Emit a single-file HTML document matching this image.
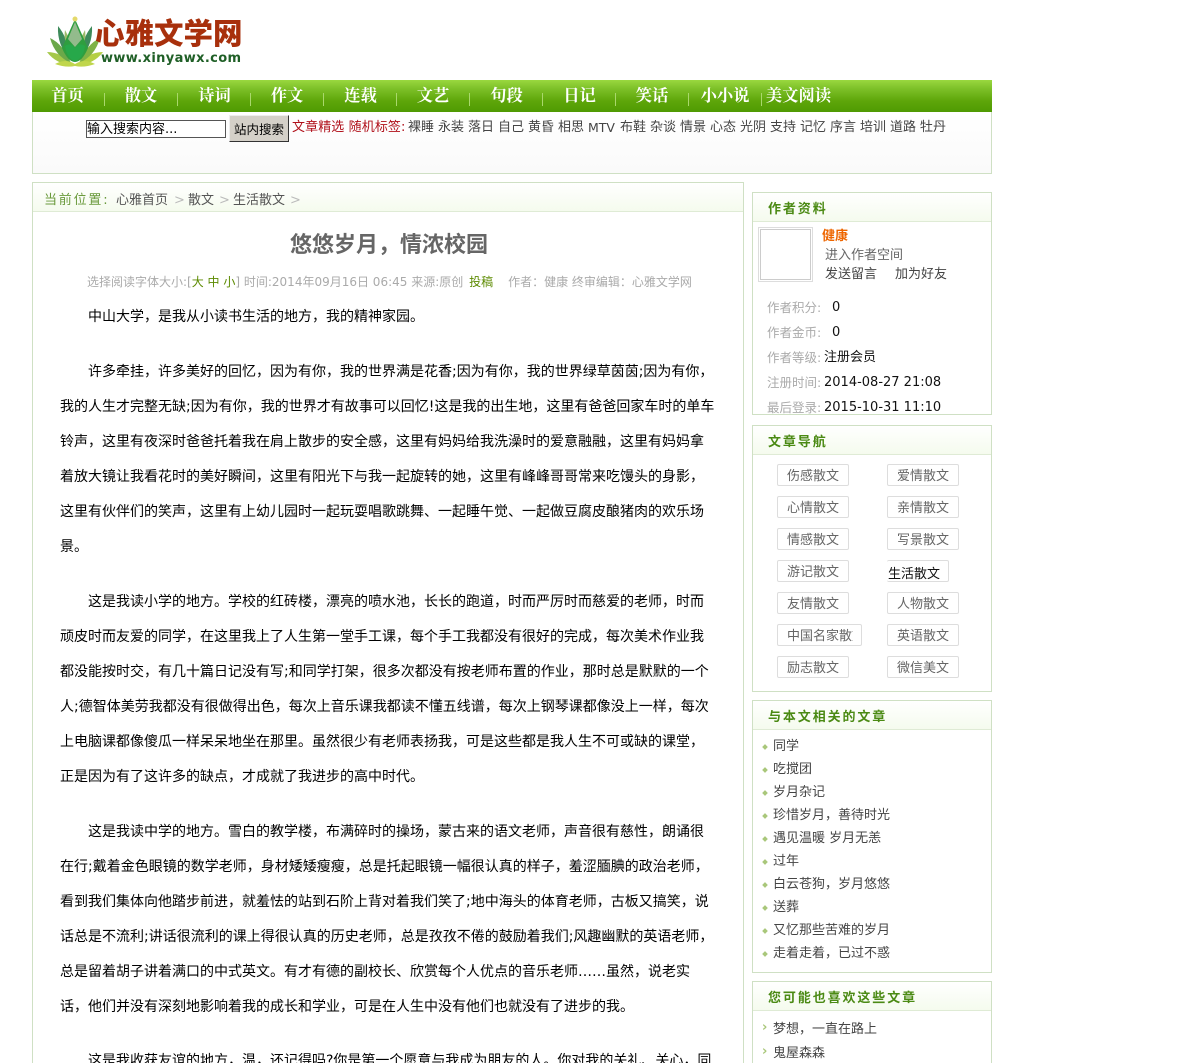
<!DOCTYPE html>
<html lang="zh-CN"><head><meta charset="utf-8"><title>悠悠岁月，情浓校园</title>
<style>
html,body{margin:0;padding:0;background:#fff;width:1200px;height:1063px;overflow:hidden}
body{position:relative;font-family:"DejaVu Sans","WenQuanYi Zen Hei","Noto Sans CJK SC",sans-serif;font-size:13px;color:#333}
.a,.a *{white-space:nowrap}
.a{position:absolute}
.box{position:absolute;box-sizing:border-box;border:1px solid #cfe0c4;background:#fff;overflow:hidden}
.hd{position:absolute;left:0;right:0;top:0;height:28px;background:linear-gradient(#fff,#f5fbee);border-bottom:1px solid #dfebd5}
.ht{position:absolute;left:15px;top:9px;font-weight:bold;font-size:13px;letter-spacing:1.9px;color:#4b8a14;line-height:16px}
.n{position:absolute;top:84px;font-family:"Liberation Serif","Noto Serif CJK SC",serif;font-size:16.3px;font-weight:bold;color:#fff;line-height:24px;white-space:nowrap;transform:translateX(-50%)}
.s{position:absolute;top:93px;width:1px;height:13px;background:#a9d86c}
.t{position:absolute;top:120px;line-height:15px;color:#444;font-size:13px;white-space:nowrap}
.l{position:absolute;font-size:14px;line-height:20px;color:#000;white-space:nowrap;font-family:"WenQuanYi Zen Hei","DejaVu Sans",sans-serif}
#art{position:absolute;left:0;top:0;width:714px;height:1063px;overflow:hidden}
.btn{position:absolute;box-sizing:border-box;width:72px;height:22px;border:1px solid #ddd;border-radius:2px;padding-left:9px;line-height:23px;color:#666;font-size:13px;overflow:hidden;white-space:nowrap;background:#fff}
.li{position:absolute;left:20px;color:#444;line-height:16px;font-size:13px;white-space:nowrap}
.d{position:absolute;left:10px;width:4px;height:4px;background:#a9c77a;transform:rotate(45deg)}
.g{color:#aaa;position:absolute;left:14px;line-height:16px;font-size:12.5px;white-space:nowrap}
.v{color:#111;position:absolute;line-height:16px;font-size:13px;white-space:nowrap}
</style></head><body>

<!-- logo -->
<svg class="a" style="left:46px;top:14px" width="58" height="54" viewBox="0 0 58 54">
<path d="M1 38 Q16 38 26 51 Q10 50 1 38Z" fill="#a5c84a"/>
<path d="M57 38 Q42 38 32 51 Q48 50 57 38Z" fill="#b5cf44"/>
<path d="M4 24 Q17 30 25 49 Q9 42 4 24Z" fill="#6ba84a"/>
<path d="M54 24 Q41 30 33 49 Q49 42 54 24Z" fill="#7fb246"/>
<path d="M12 12 Q22 24 24 44 Q11 32 12 12Z" fill="#3d8a5a"/>
<path d="M46 12 Q36 24 34 44 Q47 32 46 12Z" fill="#3d8a5a"/>
<path d="M19 16 Q25 26 25 38 Q17 28 19 16Z" fill="#9dbb6a"/>
<path d="M39 16 Q33 26 33 38 Q41 28 39 16Z" fill="#9dbb6a"/>
<path d="M29 5 L42 34 Q36 48 29 48 Q22 48 16 34Z" fill="#2f9e3f"/>
<path d="M29 8 L36 25 L29 33 L22 25Z" fill="#93bb8c"/>
<path d="M19 32 Q25 28 29 34 Q33 28 39 32 Q37 45 29 47 Q21 45 19 32Z" fill="#27a84a"/>
<circle cx="29" cy="5" r="2.5" fill="#e4d96a"/>
<path d="M9 50 Q20 44 29 50 Q38 44 49 50 Q38 54 29 52 Q20 54 9 50Z" fill="#c0d64c"/>
</svg>
<div class="a" style="left:95px;top:14px;font-family:'Noto Sans CJK SC',sans-serif;font-weight:900;font-size:29.5px;line-height:36px;color:#a8300c">心雅文学网</div>
<div class="a" style="left:101px;top:51px;font-weight:bold;font-size:13px;line-height:16px;color:#1f5f26;letter-spacing:.36px">www.xinyawx.com</div>

<!-- nav -->
<div class="a" style="left:32px;top:80px;width:960px;height:32px;background:linear-gradient(#9ad83f 0,#7fc22a 25%,#5ea60a 65%,#4f9a02 100%)"></div>
<div class="n" style="left:67.5px">首页</div><div class="n" style="left:141px">散文</div><div class="n" style="left:214.5px">诗词</div><div class="n" style="left:287px">作文</div><div class="n" style="left:360.5px">连载</div><div class="n" style="left:433px">文艺</div><div class="n" style="left:506.5px">句段</div><div class="n" style="left:579.5px">日记</div><div class="n" style="left:652px">笑话</div><div class="n" style="left:725px">小小说</div><div class="n" style="left:798.5px">美文阅读</div>
<i class="s" style="left:104px"></i><i class="s" style="left:177px"></i><i class="s" style="left:250px"></i><i class="s" style="left:323px"></i><i class="s" style="left:396px"></i><i class="s" style="left:469px"></i><i class="s" style="left:542px"></i><i class="s" style="left:615px"></i><i class="s" style="left:688px"></i><i class="s" style="left:761px"></i>

<!-- search -->
<div class="a" style="left:32px;top:112px;width:960px;height:62px;box-sizing:border-box;border:1px solid #cfe0c4;border-top:0;background:linear-gradient(#fff,#fafafa)"></div>
<div class="a" style="left:86px;top:120px;width:140px;height:18px;box-sizing:border-box;border:1px solid #555;background:#fff;color:#000;font-size:13px;line-height:18px">输入搜索内容...</div>
<div class="a" style="left:229px;top:115px;width:60px;height:27px;box-sizing:border-box;background:#d4d0c8;border:1px solid;border-color:#eee #333 #333 #eee;color:#000;font-size:12.5px;line-height:27px;text-align:center">站内搜索</div>
<div class="t" style="left:292px;color:#b0101a;letter-spacing:.1px">文章精选 随机标签:</div>
<div class="t" style="left:408px">裸睡</div><div class="t" style="left:438px">永装</div><div class="t" style="left:468px">落日</div><div class="t" style="left:498px">自己</div><div class="t" style="left:528px">黄昏</div><div class="t" style="left:558px">相思</div><div class="t" style="left:588px;font-size:12.5px">MTV</div><div class="t" style="left:620px">布鞋</div><div class="t" style="left:650px">杂谈</div><div class="t" style="left:680px">情景</div><div class="t" style="left:710px">心态</div><div class="t" style="left:740px">光阴</div><div class="t" style="left:770px">支持</div><div class="t" style="left:800px">记忆</div><div class="t" style="left:830px">序言</div><div class="t" style="left:860px">培训</div><div class="t" style="left:890px">道路</div><div class="t" style="left:920px">牡丹</div>

<!-- main -->
<div class="a" style="left:32px;top:182px;width:712px;height:900px;box-sizing:border-box;border:1px solid #cfe0c4;background:#fff"><div class="hd"></div></div>
<div class="a" style="left:44px;top:193px;line-height:15px;font-size:13px;color:#6a9a3c;letter-spacing:1.8px">当前位置:</div>
<div class="a" style="left:116px;top:193px;line-height:15px;color:#555">心雅首页</div>
<div class="a" style="left:174px;top:193px;line-height:15px;color:#bbb">&gt;</div>
<div class="a" style="left:188px;top:193px;line-height:15px;color:#555">散文</div>
<div class="a" style="left:219px;top:193px;line-height:15px;color:#bbb">&gt;</div>
<div class="a" style="left:233px;top:193px;line-height:15px;color:#555">生活散文</div>
<div class="a" style="left:290px;top:193px;line-height:15px;color:#bbb">&gt;</div>

<div class="a" style="left:290px;top:232px;font-size:22px;line-height:28px;font-weight:bold;color:#666">悠悠岁月，情浓校园</div>
<div class="a" style="left:87px;top:275px;line-height:15px;font-size:12px;color:#aaa">选择阅读字体大小:[<span style="color:#5c8a00">大 中 小</span>] 时间:2014年09月16日 06:45 来源:原创 <span style="color:#5c8a00;margin-left:2px">投稿</span><span style="margin-left:15px">作者：健康 终审编辑：心雅文学网</span></div>

<div id="art">
<div class="l" style="left:88px;top:307px">中山大学，是我从小读书生活的地方，我的精神家园。</div>
<div class="l" style="left:88px;top:362px">许多牵挂，许多美好的回忆，因为有你，我的世界满是花香;因为有你，我的世界绿草茵茵;因为有你，</div>
<div class="l" style="left:60px;top:397px">我的人生才完整无缺;因为有你，我的世界才有故事可以回忆!这是我的出生地，这里有爸爸回家车时的单车</div>
<div class="l" style="left:60px;top:432px">铃声，这里有夜深时爸爸托着我在肩上散步的安全感，这里有妈妈给我洗澡时的爱意融融，这里有妈妈拿</div>
<div class="l" style="left:60px;top:467px">着放大镜让我看花时的美好瞬间，这里有阳光下与我一起旋转的她，这里有峰峰哥哥常来吃馒头的身影，</div>
<div class="l" style="left:60px;top:502px">这里有伙伴们的笑声，这里有上幼儿园时一起玩耍唱歌跳舞、一起睡午觉、一起做豆腐皮酿猪肉的欢乐场</div>
<div class="l" style="left:60px;top:537px">景。</div>
<div class="l" style="left:88px;top:592px">这是我读小学的地方。学校的红砖楼，漂亮的喷水池，长长的跑道，时而严厉时而慈爱的老师，时而</div>
<div class="l" style="left:60px;top:627px">顽皮时而友爱的同学，在这里我上了人生第一堂手工课，每个手工我都没有很好的完成，每次美术作业我</div>
<div class="l" style="left:60px;top:662px">都没能按时交，有几十篇日记没有写;和同学打架，很多次都没有按老师布置的作业，那时总是默默的一个</div>
<div class="l" style="left:60px;top:697px">人;德智体美劳我都没有很做得出色，每次上音乐课我都读不懂五线谱，每次上钢琴课都像没上一样，每次</div>
<div class="l" style="left:60px;top:732px">上电脑课都像傻瓜一样呆呆地坐在那里。虽然很少有老师表扬我，可是这些都是我人生不可或缺的课堂，</div>
<div class="l" style="left:60px;top:767px">正是因为有了这许多的缺点，才成就了我进步的高中时代。</div>
<div class="l" style="left:88px;top:822px">这是我读中学的地方。雪白的教学楼，布满碎时的操场，蒙古来的语文老师，声音很有慈性，朗诵很</div>
<div class="l" style="left:60px;top:857px">在行;戴着金色眼镜的数学老师，身材矮矮瘦瘦，总是托起眼镜一幅很认真的样子，羞涩腼腆的政治老师，</div>
<div class="l" style="left:60px;top:892px">看到我们集体向他踏步前进，就羞怯的站到石阶上背对着我们笑了;地中海头的体育老师，古板又搞笑，说</div>
<div class="l" style="left:60px;top:927px">话总是不流利;讲话很流利的课上得很认真的历史老师，总是孜孜不倦的鼓励着我们;风趣幽默的英语老师，</div>
<div class="l" style="left:60px;top:962px">总是留着胡子讲着满口的中式英文。有才有德的副校长、欣赏每个人优点的音乐老师……虽然，说老实</div>
<div class="l" style="left:60px;top:997px">话，他们并没有深刻地影响着我的成长和学业，可是在人生中没有他们也就没有了进步的我。</div>
<div class="l" style="left:88px;top:1051px">这是我收获友谊的地方，温，还记得吗?你是第一个愿意与我成为朋友的人。你对我的关礼、关心，同</div>
</div>

<!-- author -->
<div class="box" style="left:752px;top:192px;width:240px;height:223px">
<div class="hd"></div><div class="ht">作者资料</div>
<div class="a" style="left:5px;top:34px;width:55px;height:55px;box-sizing:border-box;border:1px solid #ddd;padding:1px"><div style="box-sizing:border-box;width:51px;height:51px;border:1px solid #ccc"></div></div>
<div class="a" style="left:69px;top:36px;font-weight:bold;color:#ee6600;line-height:16px">健康</div>
<div class="a" style="left:72px;top:55px;color:#666;line-height:16px">进入作者空间</div>
<div class="a" style="left:72px;top:74px;color:#444;line-height:16px">发送留言</div>
<div class="a" style="left:142px;top:74px;color:#444;line-height:16px">加为好友</div>
<div class="g" style="top:107px">作者积分:</div><div class="v" style="left:79px;top:107px">0</div>
<div class="g" style="top:132px">作者金币:</div><div class="v" style="left:79px;top:132px">0</div>
<div class="g" style="top:157px">作者等级:</div><div class="v" style="left:71px;top:157px">注册会员</div>
<div class="g" style="top:182px">注册时间:</div><div class="v" style="left:71px;top:182px">2014-08-27 21:08</div>
<div class="g" style="top:207px">最后登录:</div><div class="v" style="left:71px;top:207px">2015-10-31 11:10</div>
</div>

<!-- nav box -->
<div class="box" style="left:752px;top:425px;width:240px;height:267px">
<div class="hd"></div><div class="ht">文章导航</div>
<div class="btn" style="left:24px;top:38px">伤感散文</div><div class="btn" style="left:134px;top:38px">爱情散文</div>
<div class="btn" style="left:24px;top:70px">心情散文</div><div class="btn" style="left:134px;top:70px">亲情散文</div>
<div class="btn" style="left:24px;top:102px">情感散文</div><div class="btn" style="left:134px;top:102px">写景散文</div>
<div class="btn" style="left:24px;top:134px">游记散文</div><div class="btn" style="left:134px;top:134px;width:62px;color:#111;border-left:0;padding-left:1px;line-height:28px">生活散文</div>
<div class="btn" style="left:24px;top:166px">友情散文</div><div class="btn" style="left:134px;top:166px">人物散文</div>
<div class="btn" style="left:24px;top:198px;width:85px"><span style="display:block;width:66px;overflow:hidden">中国名家散文</span></div><div class="btn" style="left:134px;top:198px">英语散文</div>
<div class="btn" style="left:24px;top:230px">励志散文</div><div class="btn" style="left:134px;top:230px">微信美文</div>
</div>

<!-- related -->
<div class="box" style="left:752px;top:700px;width:240px;height:273px">
<div class="hd"></div><div class="ht">与本文相关的文章</div>
<i class="d" style="top:44px"></i><div class="li" style="top:38px">同学</div>
<i class="d" style="top:67px"></i><div class="li" style="top:61px">吃搅团</div>
<i class="d" style="top:90px"></i><div class="li" style="top:84px">岁月杂记</div>
<i class="d" style="top:113px"></i><div class="li" style="top:107px">珍惜岁月，善待时光</div>
<i class="d" style="top:136px"></i><div class="li" style="top:130px">遇见温暖 岁月无恙</div>
<i class="d" style="top:159px"></i><div class="li" style="top:153px">过年</div>
<i class="d" style="top:182px"></i><div class="li" style="top:176px">白云苍狗，岁月悠悠</div>
<i class="d" style="top:205px"></i><div class="li" style="top:199px">送葬</div>
<i class="d" style="top:228px"></i><div class="li" style="top:222px">又忆那些苦难的岁月</div>
<i class="d" style="top:251px"></i><div class="li" style="top:245px">走着走着，已过不惑</div>
</div>

<!-- like -->
<div class="box" style="left:752px;top:981px;width:240px;height:120px">
<div class="hd"></div><div class="ht">您可能也喜欢这些文章</div>
<div class="a" style="left:9px;top:38px;color:#a9c77a;font-size:13px;font-weight:bold;line-height:16px">›</div><div class="li" style="top:40px">梦想，一直在路上</div>
<div class="a" style="left:9px;top:62px;color:#a9c77a;font-size:13px;font-weight:bold;line-height:16px">›</div><div class="li" style="top:64px">鬼屋森森</div>
</div>
</body></html>
